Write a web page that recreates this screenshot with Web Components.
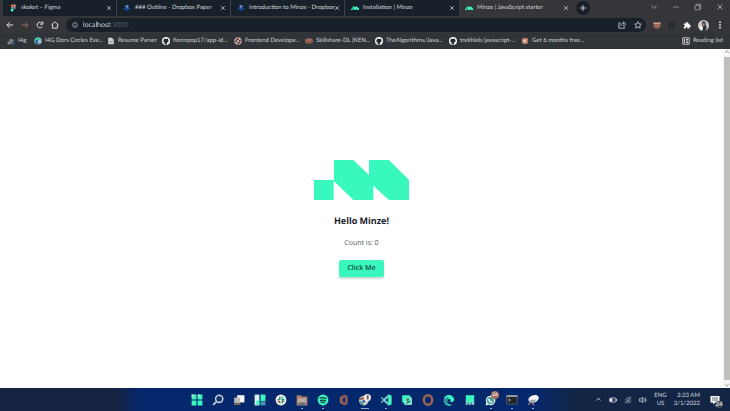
<!DOCTYPE html>
<html lang="en">
<head>
<meta charset="utf-8">
<title>Minze | JavaScript starter</title>
<style>
html,body{height:100%;margin:0}
body{font-family:Lato,"Noto Sans",sans-serif;font-size:6px;line-height:10px;color:#d3d6d8;background:#fff;overflow:hidden;text-rendering:geometricPrecision}
</style>
</head>
<body>
<desktop-screen></desktop-screen>
<script>
const ICONS = {
figma:'<path fill="#f2644c" d="M7 1H11V7H7a3 3 0 0 1 0-6z"/><path fill="#f5937d" d="M11 1h3a3 3 0 0 1 0 6h-3z"/><path fill="#b9a29b" d="M11 7H7a3 3 0 0 0 0 5h4z"/><circle cx="14" cy="9.500" r="2.700" fill="#73a6c8"/><path fill="#38f8bd" d="M11 12H8a3.500 3.500 0 1 0 3 4z"/>',
paper:'<path fill="#2457a8" d="M10 1l6 5-3 3 5 2-8 8-8-8 5-2-3-3z"/><path fill="#6b8fc4" d="M10 2l4 4-4 4-4-4z"/><path fill="#0b2c74" d="M4 11l6 3 6-3-6 7z"/>',
minze:'<path fill="#38f8bd" d="M0 12h4V6h4l3 3V6h4l5 5v4h-4l-3-3v3H9l-4-4v4H0z"/>',
close:'<path d="M4 4l12 12M16 4L4 16" fill="none" stroke="currentColor" stroke-width="2.500"/>',
plus:'<path d="M10 3v14M3 10h14" stroke="currentColor" stroke-width="2.500"/>',
down:'<path d="M4 6l6 8 6-8" fill="none" stroke="currentColor" stroke-width="2"/>',
up:'<path d="M4 13l6-7 6 7" fill="none" stroke="currentColor" stroke-width="2.500"/>',
min:'<path d="M3 10h14" stroke="currentColor" stroke-width="2"/>',
restore:'<path d="M3 6h11v11H3zM6 6V3h11v11h-3" fill="none" stroke="currentColor" stroke-width="2"/>',
back:'<path d="M18 10H3m6-7l-7 7 7 7" fill="none" stroke="currentColor" stroke-width="2.500"/>',
forward:'<path d="M2 10h15M11 3l7 7-7 7" fill="none" stroke="currentColor" stroke-width="2.500"/>',
reload:'<path d="M16 13.500A7 7 0 1 1 15.500 6M17 1v7h-7" fill="none" stroke="currentColor" stroke-width="2.500"/>',
home:'<path d="M1 10l9-8 9 8M4 9v9h12V9" fill="none" stroke="currentColor" stroke-width="2.500"/>',
info:'<circle cx="10" cy="10" r="8" fill="none" stroke="currentColor" stroke-width="2"/><path d="M10 9v6M10 5v2" stroke="currentColor" stroke-width="2"/>',
share:'<path d="M7 5H2v13h14v-4M6 13c1-5 4-7 8-7V2l5 6-5 5V9" fill="none" stroke="currentColor" stroke-width="2"/>',
star:'<path d="M10 1.500l2.600 5.700 6 .6-4.500 4 1.400 6.200-5.500-3.300L4.500 18l1.400-6.200-4.500-4 6-.6z" fill="none" stroke="currentColor" stroke-width="2"/>',
mask:'<path fill="#9b6756" d="M1 4h18v7c0 5-4 8-9 8s-9-3-9-8z"/><path fill="#d6a791" d="M1 4h18v3H1z"/>',
slashes:'<path d="M1 17c5 1 3-12 9-13M9 18c5 1 3-12 9-15" fill="none" stroke="#17212b" stroke-width="3.500"/>',
puzzle:'<path fill="#fff" d="M2 6h5V5a2.500 2.500 0 1 1 5 0v1h4v4h1a2.500 2.500 0 0 1 0 5h-1v4h-5v-2a2 2 0 0 0-4 0v2H2v-5h1a2 2 0 0 0 0-4H2z"/>',
avatar:'<circle cx="10" cy="10" r="10" fill="#cbc8c5"/><path fill="#283038" d="M8 3c4-2 7 1 6 5l2 7-3 5H8l1-8c-2-4-2-7-1-9z"/><path fill="#b18270" d="M9 5h3v6H9z"/><path fill="#fff" d="M3 11l5 2v5l-4-2z"/>',
more:'<path fill="currentColor" d="M8 1h4v4H8zM8 8h4v4H8zM8 15h4v4H8z"/>',
i4g:'<path fill="#647987" d="M1 18V12l5-2V5h5v4l5-2 3 11z"/><path fill="#b88472" d="M3 13h4v5H3zM10 5h4v7h-4z"/><path fill="#2e587f" d="M12 11h6v7h-6z"/>',
edgeball:'<circle cx="10" cy="10" r="9" fill="#a8cbd0"/><path fill="#38d9b1" d="M1 10a9 9 0 0 1 14-7L9 11z"/><path fill="#2b65a2" d="M18 9c-6-4-11 0-8 5 2 3 5 2 7 1-3 5-12 5-14-2C1 7 10 3 18 9z"/>',
doc:'<path fill="#d1cfcd" d="M3 2h9l5 5v11H3z"/><path d="M6 12h8" stroke="#65717a" stroke-width="2"/>',
github:'<circle cx="10" cy="10" r="10" fill="#f7f7f7"/><path fill="#22292f" d="M5 4l3 1q2-.7 4 0l3-1 .5 3q3 5-3 7v5H8v-3c-3 1-3-2-5-3 3-.5 3 2 5 1v-1C3 13 2 10 4.500 7z"/>',
frontend:'<circle cx="10" cy="10" r="8" fill="none" stroke="#cba191" stroke-width="3"/><path d="M3 6l14 8M14 3L7 17M5 15L15 5" stroke="#e5c1b1" stroke-width="2"/>',
skill:'<rect y="4" width="20" height="12" rx="6" fill="#a56d5b"/><path d="M4 12q3 3 4-2M12 12q3 3 4-2" fill="none" stroke="#34292a" stroke-width="2"/>',
six:'<circle cx="10" cy="10" r="8" fill="#b37865"/><path d="M4 14L16 5M7 5l6 11M4 8l8 3" stroke="#ecd2c7" stroke-width="2"/>',
reading:'<path fill="none" stroke="#d3c2bb" stroke-width="2.500" d="M2 2h16v16H2z"/><path stroke="#d8e0e4" stroke-width="2.500" d="M6 5v10M10 6h5M10 10h5M10 14h5"/>',
windows:'<path fill="#38f8bd" d="M1 1h8v8H1zM11 1h8v8h-8zM1 11h8v8H1zM11 11h8v8h-8z"/><path fill="#9cdfc9" d="M1 1h4v4H1zM11 1h4v4h-4z"/>',
search:'<circle cx="12" cy="8" r="6" fill="#153970" stroke="#c4d1db" stroke-width="2.500"/><path d="M7 13l-5 5" stroke="#c4d1db" stroke-width="3"/>',
tasks:'<path fill="#fff" d="M7 2h12v12H7z"/><path fill="#b8b8b8" d="M2 6h10v12H2z"/><path fill="#6f5650" d="M2 15h10v3H2z"/>',
widgets:'<path fill="#d9eef0" d="M1 1h8v18H1z"/><path fill="#38f8bd" d="M11 1h8v11h-8zM4 11h5v7H4z"/><path fill="#4a94b4" d="M11 13h8v6h-8z"/>',
slack:'<circle cx="10" cy="10" r="9" fill="#fff"/><path d="M8 4v5H4M12 4v5h4M8 16v-4M12 16v-4h4" fill="none" stroke="#4b8974" stroke-width="2.500"/><path fill="#ad6a57" d="M4 11h4v3H4z"/><path fill="#38f8bd" d="M11 4h3v4h-3z"/>',
folder:'<path fill="#a77a6b" d="M1 2h7l2 2h9v15H1z"/><path fill="#b9aaa2" d="M3 7h14v8H3z"/><path fill="#646e77" d="M5 14h10v5H5z"/>',
spotify:'<circle cx="10" cy="10" r="9" fill="#38f8bd"/><path d="M4 7q7-2 12 1M5 11q6-2 10 1M6 14q4-1 7 1" fill="none" stroke="#16353e" stroke-width="2"/>',
office:'<path fill="#955f50" fill-rule="evenodd" d="M3 5l8-4 5 3v12l-5 3-8-4zm5 2v6l4 2V5z"/>',
chrome:'<circle cx="8" cy="11" r="8" fill="#c8cdc8"/><path fill="#9a6553" d="M0 9q6-7 14-2l-5 4z"/><path fill="#338f83" d="M0 12l6 7 3-6z"/><circle cx="8" cy="12" r="3" fill="#2c67a0" stroke="#eee"/><circle cx="14" cy="6" r="6" fill="#ece8e4"/><path fill="#75574e" d="M13 2h3v7h-3z"/>',
vscode:'<path fill="#74c8cd" fill-rule="evenodd" d="M14 1l5 2v14l-5 2-8-7-3 3-2-1 4-4-4-4 2-1 3 3zm0 5l-5 4 5 4z"/><path fill="#38f8bd" d="M14 1l5 2v14l-5 2z"/>',
green:'<path fill="#38f8bd" d="M2 2h12l4 5v11H7l-5-5z"/><path fill="#88e4ca" d="M6 6h12v12H6z"/><path d="M14 9q-5-2-4 1t4 2-5 4" fill="none" stroke="#177d72" stroke-width="2"/>',
opera:'<ellipse cx="10" cy="10" rx="7" ry="8" fill="none" stroke="#9f6653" stroke-width="4"/>',
edge:'<path fill="#38f8bd" d="M2 14C-1 3 10-1 16 4c5 5 2 11-4 9 3-5-4-7-5-1-1 5 5 7 9 5-5 5-12 2-14-3z"/><path fill="#3080a0" d="M2 9q9-7 7 0-4 5 1 9Q3 18 2 9z"/>',
pad:'<path fill="#38f8bd" d="M3 2h14v12H3z"/><path fill="#8adcd2" d="M3 13h14v5H3z"/><path d="M7 14v4M12 14v4" stroke="#245d7c" stroke-width="2"/>',
whatsapp:'<path fill="#e3eee8" d="M1 19l1-5a8 8 0 1 1 4 4z"/><circle cx="9" cy="11" r="6" fill="#4aa49a"/><path d="M6 8q1 5 6 6" stroke="#fff" stroke-width="2" fill="none"/>',
terminal:'<path fill="#20262b" stroke="#66757d" stroke-width="1" d="M1 3h18v14H1z"/><path fill="#9da5aa" d="M1 2h18v3H1z"/><path d="M4 8l3 2-3 2" fill="none" stroke="#c3c3c3" stroke-width="1.500"/>',
snip:'<ellipse cx="11" cy="8" rx="9" ry="6" transform="rotate(-22 11 8)" fill="#f6f6f6"/><path fill="#9aa8b2" d="M4 10l12-1-5 6H6z"/><path d="M6 14l-4 4M9 15l3 4" stroke="#b57d6d" stroke-width="2"/>',
battery:'<rect x="1" y="5" width="16" height="10" rx="2" fill="none" stroke="#dce1e4" stroke-width="2"/><path fill="#fff" d="M3 7h6v6H3zM17 8h3v4h-3z"/>',
wifi:'<path d="M2 18L18 2M7 18q0-6 10-9M11 18q1-3 7-4M3 11q4-7 11-8" fill="none" stroke="#a9b1b9" stroke-width="2"/>',
sound:'<path fill="none" stroke="#d0d7dc" stroke-width="2" d="M1 7h4l4-4v14l-4-4H1zM12 7q3 3 0 6M15 4q6 6 0 12"/>',
notes:'<path fill="#fff" d="M1 2h18v13h-9l-4 4v-4H1z"/><path d="M4 6h12M4 10h12" stroke="#536071" stroke-width="2"/>'
};

const define = (name, render) => customElements.define(name, class extends HTMLElement {
  connectedCallback() {
    if (this.shadowRoot) return;
    this.attachShadow({mode:'open'}).innerHTML = render(this);
  }
});
const BASE = '*{box-sizing:border-box}button{all:unset;box-sizing:border-box;display:flex;align-items:center;justify-content:center}a{color:inherit;text-decoration:none}';
const ic = (name, size = 8) => `<ui-icon name="${name}" size="${size}"></ui-icon>`;

define('ui-icon', e => `<style>:host{display:block;flex:none;width:${e.getAttribute('size')}px;height:${e.getAttribute('size')}px}svg{display:block;width:100%;height:100%}</style><svg viewBox="0 0 20 20" aria-hidden="true">${ICONS[e.getAttribute('name')]}</svg>`);

define('browser-tab', e => `<style>${BASE}
:host{display:flex;align-items:center;gap:3px;flex:0 1 114px;min-width:0;height:16px;padding:0 4px 0 6px;background:#18212a}
:host([active]){background:#34363a}
:host([line]){border-right:1px solid #3c444b;background-clip:padding-box}
.t{flex:1;min-width:0;display:flex;align-items:center;gap:4px;justify-content:flex-start}
.t span{flex:1;white-space:nowrap}
</style><button class="t" role="tab">${ic(e.getAttribute('icon'))}<span><slot></slot></span></button><button aria-label="Close tab">${ic('close',6)}</button>`);

define('tab-strip', () => `<style>${BASE}
:host{display:flex;height:17px;padding-left:3px;background:#34363a;align-items:flex-start}
nav{display:flex;flex:0 1 570px;min-width:0}
.new{width:14px;height:14px;border-radius:50%;background:#18212a;margin:1px 0 0 3px}
.win{margin-left:auto;display:flex;gap:14px;padding:3px 6px 0 0;color:#a3a09e}
</style><nav role="tablist">
<browser-tab icon="figma" line>skoket – Figma</browser-tab>
<browser-tab icon="paper" line>### Outline - Dropbox Paper</browser-tab>
<browser-tab icon="paper" line>Introduction to Minze - Dropbox</browser-tab>
<browser-tab icon="minze">Installation | Minze</browser-tab>
<browser-tab icon="minze" active>Minze | JavaScript starter</browser-tab></nav>
<button class="new" aria-label="New tab">${ic('plus')}</button>
<div class="win"><button aria-label="Search tabs">${ic('down')}</button><button aria-label="Minimize">${ic('min')}</button><button aria-label="Restore">${ic('restore')}</button><button aria-label="Close">${ic('close')}</button></div>`);

define('address-bar', () => `<style>${BASE}
:host{display:flex;align-items:center;height:16px;background:#34363a;padding:0 6px}
.nav{display:flex;gap:7px;width:60px;color:#e2e2e2}.f{color:#9c7163}
form{display:flex;align-items:center;gap:5px;flex:1;height:14px;border-radius:7px;background:#18212a;padding:0 4px 0 6px;margin:0;min-width:0}
input{all:unset;flex:1;min-width:0;height:12px;line-height:12px;font-size:7px;background:linear-gradient(90deg,#e4e7e9 28px,#5b6064 28px);-webkit-background-clip:text;background-clip:text;-webkit-text-fill-color:transparent}
.pair{display:flex;gap:8px}
.ext{display:flex;align-items:center;gap:7px;padding-left:7px;color:#fff}
</style><div class="nav"><button aria-label="Back">${ic('back')}</button><button class="f" aria-label="Forward">${ic('forward')}</button><button aria-label="Reload">${ic('reload')}</button><button aria-label="Home">${ic('home')}</button></div>
<form>${ic('info',6)}<input aria-label="Address" value="localhost:3000"><div class="pair"><button type="button" aria-label="Share">${ic('share')}</button><button type="button" aria-label="Bookmark">${ic('star')}</button></div></form>
<div class="ext"><button aria-label="Mask">${ic('mask')}</button><button aria-label="Pens">${ic('slashes')}</button><button aria-label="Extensions">${ic('puzzle')}</button><button aria-label="Profile">${ic('avatar',11)}</button><button aria-label="Menu">${ic('more')}</button></div>`);

const marks = [['i4g','I4g'],['edgeball','I4G Dors Circles Eve...'],['doc','Resume Parser'],['github','florinpop17/app-id...'],['frontend','Frontend Develope...'],['skill','Skillshare-DL [KEN...'],['github','TheAlgorithms/Java...'],['github','trekhleb/javascript-...'],['six','Get 6 months free...']];
define('bookmark-bar', () => `<style>${BASE}
:host{display:flex;height:16px;padding:0 7px;background:#303337;align-items:center}
nav{display:grid;grid-template-columns:27px 73px 55px 72px 71px 70px 74px 72px 72px;flex:1;min-width:0}
a{display:flex;align-items:center;gap:3px;white-space:nowrap;min-width:0}
</style><nav>${marks.map(([i,t])=>`<a href="#">${ic(i)}<span>${t}</span></a>`).join('')}</nav><a href="#">${ic('reading')}<span>Reading list</span></a>`);

define('minze-logo', () => `<style>:host{display:block;width:95px}svg{display:block;width:100%}</style><svg viewBox="0 0 285 120" role="img" aria-label="Minze"><path fill="#38f8bd" d="M0 60H60V0H118L165 45V0H225L285 60V120H225L178 77V120H118L59 62V120H0z"/></svg>`);

define('click-counter', () => `<style>${BASE}
:host{display:flex;flex-direction:column;align-items:center;color:#49555c;font-size:7px}
p{margin:0 0 11px}
button{height:17px;padding:0 8px;border-radius:2px;background:#38f8bd;color:#173f3d;font-weight:600;box-shadow:0 2px 2px #ccdcd7}
</style><p>Count is: 0</p><button>Click Me</button>`);

define('page-view', () => `<style>${BASE}
:host{display:flex;flex:1;min-height:0;background:#fff}
main{flex:1;display:flex;flex-direction:column;align-items:center;justify-content:center;font-family:"Open Sans","Noto Sans",sans-serif}
h1{margin:14px 0 11px;font-size:9px;line-height:14px;color:#17212b;font-weight:700}
.bar{width:7px;display:flex;flex-direction:column;align-items:center;color:#777;background:#f6f6f6}
.thumb{flex:1;width:6px;background:#bfc0bb;margin:2px 0}
</style><main><minze-logo></minze-logo><h1>Hello Minze!</h1><click-counter></click-counter></main><div class="bar">${ic('up',6)}<div class="thumb"></div>${ic('down',6)}</div>`);

const apps = ['windows','search','tasks','widgets','slack','folder','spotify','office','chrome','vscode','green','opera','edge','pad','whatsapp','terminal','snip'];
const open = ['folder','spotify','chrome','vscode','whatsapp','terminal','snip'];
define('task-bar', () => `<style>${BASE}
:host{display:grid;grid-template-columns:1fr auto 1fr;height:23px;color:#d5dade;background:linear-gradient(90deg,#152340 0 16%,#05276c 19% 73%,#122544 79%)}
nav{display:flex;grid-column:2;gap:9px}
nav button{height:23px;position:relative}
.on::after{content:"";position:absolute;bottom:2px;width:2px;height:1px;background:#9ba8b7}
.chrome::after{width:8px}
.badge{position:absolute;right:-2px;top:3px;width:8px;height:8px;border-radius:50%;background:#a36e5f;color:#fff;font-size:5px;line-height:8px;text-align:center}
.tray{display:flex;align-items:center;justify-content:flex-end;gap:7px;padding-right:10px;line-height:8px;white-space:nowrap}
.r{text-align:right}.lang{text-align:center}.note{position:relative;margin-left:3px}.note span{position:absolute;right:-3px;bottom:-3px;width:8px;height:7px;border-radius:3px;background:#414b57;color:#fff;line-height:7px;text-align:center}
</style><nav>${apps.map(a=>`<button aria-label="${a}" class="${a} ${open.includes(a)?'on':''}">${ic(a,12)}${a==='whatsapp'?'<span class="badge">26</span>':''}</button>`).join('')}</nav>
<div class="tray"><button aria-label="Hidden icons">${ic('up',7)}</button>${ic('battery')}${ic('wifi')}${ic('sound')}<div class="lang">ENG<br>US</div><div class="r">3:23 AM<br>3/1/2022</div><button class="note" aria-label="Notifications">${ic('notes',10)}<span>24</span></button></div>`);

define('desktop-screen', () => `<style>:host{display:flex;flex-direction:column;height:100vh}</style><tab-strip></tab-strip><address-bar></address-bar><bookmark-bar></bookmark-bar><page-view></page-view><task-bar></task-bar>`);
</script>
</body>
</html>
